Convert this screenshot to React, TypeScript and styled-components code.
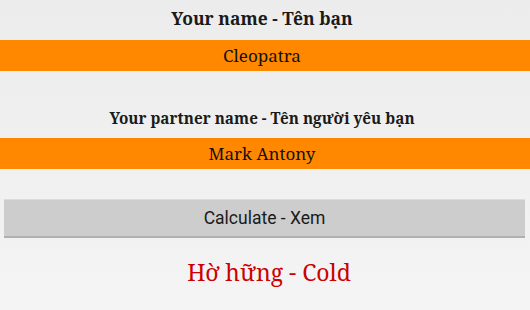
import styled, { createGlobalStyle } from "styled-components";

const Global = createGlobalStyle`
    html, body {
        margin: 0;
        padding: 0;
    }
    body {
        width: 530px;
        height: 310px;
        overflow: hidden;
        background: linear-gradient(#ececec, #f4f4f4);
    }
`;

const Page = styled.main`
    display: flex;
    flex-direction: column;
    width: 530px;
    height: 310px;
    font-family: "Noto Serif", "DejaVu Serif", serif;
`;

const Label = styled.div<{ $height: number; $size: number }>`
    height: ${(p) => p.$height}px;
    display: flex;
    align-items: flex-end;
    justify-content: center;
    padding: 0 6px 10px 0;
    box-sizing: border-box;
    font-weight: bold;
    font-size: ${(p) => p.$size}px;
    color: #1a1a1a;
`;

const NameBar = styled.div`
    height: 31px;
    display: flex;
    align-items: center;
    justify-content: center;
    padding-right: 6px;
    background: #ff8800;
    font-size: 17px;
    color: #111;
`;

const Button = styled.button`
    margin: 30px 5px 0 4px;
    height: 39px;
    border: none;
    border-top: 1px solid #dcdcdc;
    border-bottom: 2px solid #b0b0b0;
    background: #cdcdcd;
    font-family: Roboto, "Noto Sans", sans-serif;
    font-size: 17.5px;
    color: #1a1a1a;
`;

const Result = styled.div`
    margin-top: 18px;
    padding-left: 8px;
    text-align: center;
    font-size: 23px;
    color: #cc0000;
`;

const App = () => {
    return (
        <Page>
            <Global />
            <Label $height={40} $size={17.5}>Your name - Tên bạn</Label>
            <NameBar>Cleopatra</NameBar>
            <Label $height={67} $size={15.3}>Your partner name - Tên người yêu bạn</Label>
            <NameBar>Mark Antony</NameBar>
            <Button>Calculate - Xem</Button>
            <Result>Hờ hững - Cold</Result>
        </Page>
    );
};

export default App;
